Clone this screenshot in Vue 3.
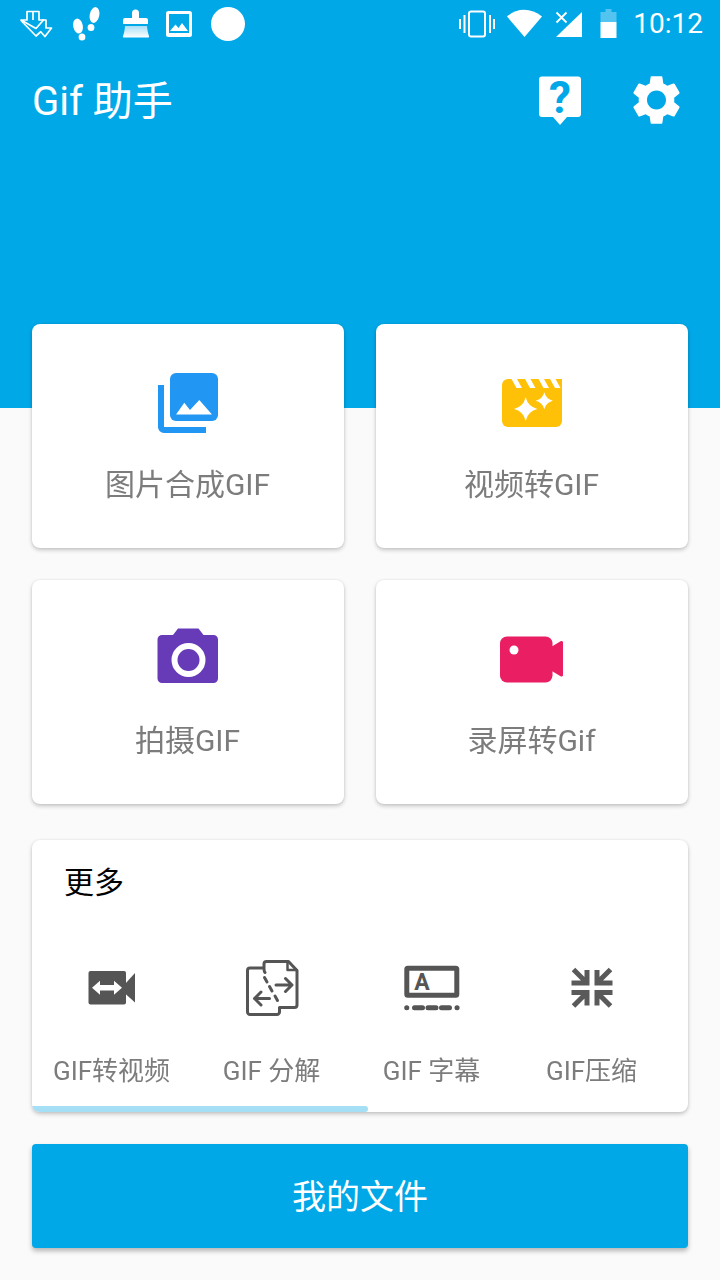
<template>
  <div class="page">
    <header class="header">
      <div class="statusbar">
        <div class="status-left">
          <svg width="36" height="48" viewBox="18 0 36 48" fill="none" stroke="#fff" stroke-width="1.7" stroke-linejoin="round">
            <path d="M27 11.500h12v8.500h4.500l-7.500 8.500-15-8.500h6z" />
            <path d="M33 11.500v8.500M42 20h4v8h5.500l-6.500 8.500-4.500-5" />
            <path d="M21 20.500l15 15.500 5-4.500" />
          </svg>
          <svg width="30" height="48" viewBox="69 0 30 48" fill="#fff">
            <ellipse cx="76" cy="26" rx="4.800" ry="7.500" transform="rotate(-12 76 26)" />
            <ellipse cx="80" cy="37" rx="3.400" ry="3.600" />
            <ellipse cx="92.500" cy="15" rx="4.800" ry="8" transform="rotate(12 92.500 15)" />
            <ellipse cx="89" cy="27.500" rx="3.400" ry="3.500" />
          </svg>
          <svg width="28" height="48" viewBox="119 0 28 48">
            <defs>
              <linearGradient id="broom" x1="0" y1="0" x2="0" y2="1">
                <stop offset="0" stop-color="#a9def6" />
                <stop offset="1" stop-color="#fff" />
              </linearGradient>
            </defs>
            <path d="M129 18v-5a3.500 3.500 0 0 1 7 0v5h7a2 2 0 0 1 2 2v4h-25v-4a2 2 0 0 1 2-2z" fill="#fff" />
            <path d="M122 26h22c.3 4 1 7.500 2 10 .3 1-.3 1.500-1 1.500h-24c-.8 0-1.300-.5-1-1.500 1-2.500 1.800-6 2-10z" fill="url(#broom)" />
          </svg>
          <svg width="27" height="48" viewBox="167 0 27 48">
            <rect x="167" y="11" width="26" height="26" rx="2.500" fill="#fff" />
            <rect x="170" y="14" width="20" height="19" fill="#01a8e8" />
            <path d="M171 31l5.500-6.500 3 3.500 3.500-5 6 8z" fill="#fff" />
          </svg>
          <div class="status-dot"></div>
        </div>
        <div class="status-right">
          <svg width="36" height="48" viewBox="460 0 36 48" fill="none" stroke="#fff" stroke-width="2">
            <rect x="470" y="11.500" width="16" height="25" rx="2" />
            <path d="M465.500 15v18M461 19v10M491 15v18M495 19v10" />
          </svg>
          <svg width="36" height="48" viewBox="508 0 36 48">
            <path d="M508 16.500C518 7.500 532 7.500 543 16.500L525.500 37z" fill="#fff" />
          </svg>
          <svg width="28" height="48" viewBox="556 0 28 48">
            <path d="M583 12v25h-26z" fill="#fff" />
            <path d="M557.500 12.500l10 10M567.500 12.500l-10 10" stroke="#fff" stroke-width="1.800" />
          </svg>
          <svg width="17" height="48" viewBox="600.500 0 17 48">
            <path d="M606 12v-3h6v3h5v10h-16v-10z" fill="#fff" opacity=".32" />
            <rect x="601" y="22" width="16" height="16" fill="#fff" />
          </svg>
          <span class="clock">10:12</span>
        </div>
      </div>
      <div class="toolbar">
        <h1 class="title">{{ title }}</h1>
        <svg class="help" width="42" height="56" viewBox="539 70 42 56">
          <path d="M542 76.500h36a3 3 0 0 1 3 3v34.500a3 3 0 0 1-3 3h-11l-7 8-7-8h-11a3 3 0 0 1-3-3v-34.500a3 3 0 0 1 3-3z" fill="#fff" />
          <text x="560" y="113" text-anchor="middle" class="help-mark">?</text>
        </svg>
        <svg class="gear" width="57" height="58" viewBox="0 0 24 24">
          <path fill="#fff" fill-rule="evenodd" d="M19.430 12.980c.04-.32.07-.64.07-.98s-.03-.66-.07-.98l2.110-1.650c.19-.15.24-.42.12-.64l-2-3.460c-.12-.22-.39-.3-.61-.22l-2.490 1c-.52-.4-1.080-.73-1.690-.98l-.38-2.650C14.460 2.180 14.250 2 14 2h-4c-.25 0-.46.18-.49.42l-.38 2.650c-.61.25-1.170.59-1.690.98l-2.490-1c-.23-.09-.49 0-.61.22l-2 3.460c-.13.22-.07.49.12.64l2.110 1.650c-.04.32-.07.65-.07.98s.03.66.07.98l-2.110 1.650c-.19.15-.24.42-.12.64l2 3.460c.12.22.39.3.61.22l2.490-1c.52.4 1.080.73 1.690.98l.38 2.650c.03.24.24.42.49.42h4c.25 0 .46-.18.49-.42l.38-2.650c.61-.25 1.170-.59 1.690-.98l2.490 1c.23.09.49 0 .61-.22l2-3.460c.12-.22.07-.49-.12-.64l-2.110-1.650zM12 16c-2.210 0-4-1.790-4-4s1.790-4 4-4 4 1.790 4 4-1.790 4-4 4z" />
        </svg>
      </div>
    </header>

    <main class="content">
      <div class="grid">
        <div class="card">
          <svg width="60" height="60" viewBox="158 373 60 60">
            <rect x="170" y="373" width="48" height="48" rx="6" fill="#2196f3" />
            <path d="M176 414.500l8.300-11.800 5.700 7.300 9.300-10 12.700 14.500z" fill="#fff" />
            <path d="M158 385h6v42h42v6h-42a6 6 0 0 1-6-6z" fill="#2196f3" />
          </svg>
          <span class="card-label">图片合成GIF</span>
        </div>
        <div class="card">
          <svg width="60" height="60" viewBox="502 373 60 60">
            <path d="M508 379h54v42a6 6 0 0 1-6 6h-48a6 6 0 0 1-6-6v-36a6 6 0 0 1 6-6z" fill="#ffc107" />
            <path d="M511.500 379h5.500l5 9h-5.500zM525 379h5.500l5 9h-5.500zM538.500 379h5.500l5 9h-5.500zM550 379h5.500l5 9h-5.500z" fill="#fff" />
            <path d="M525.700 397.300Q528 406.700 537.400 409 528 411.300 525.700 420.700 523.400 411.300 514 409 523.400 406.700 525.700 397.300z" fill="#fff" />
            <path d="M544.300 392.200Q546 399 552.800 400.700 546 402.400 544.300 409.200 542.600 402.400 535.800 400.700 542.600 399 544.300 392.200z" fill="#fff" />
          </svg>
          <span class="card-label">视频转GIF</span>
        </div>
        <div class="card">
          <svg width="62" height="60" viewBox="157 629 62 60">
            <path d="M173 635l5-6.500h20.500l5 6.500h10a4.500 4.500 0 0 1 4.500 4.500v39a4.500 4.500 0 0 1-4.500 4.500h-51.500a4.500 4.500 0 0 1-4.500-4.500v-39a4.500 4.500 0 0 1 4.500-4.500z" fill="#673ab7" />
            <circle cx="188.500" cy="660" r="14" fill="none" stroke="#fff" stroke-width="6" />
          </svg>
          <span class="card-label">拍摄GIF</span>
        </div>
        <div class="card">
          <svg width="64" height="60" viewBox="500 629 64 60">
            <rect x="500" y="636.500" width="52.500" height="46" rx="7" fill="#e91e63" />
            <path d="M551 647l10-6a1.500 1.500 0 0 1 2 1.500v32.500a1.500 1.500 0 0 1-2 1.500l-10-6z" fill="#e91e63" />
            <circle cx="514" cy="650" r="4.500" fill="#fff" />
          </svg>
          <span class="card-label">录屏转Gif</span>
        </div>
      </div>

      <section class="more">
        <h2 class="more-title">更多</h2>
        <div class="more-row">
          <div class="more-item">
            <svg width="48" height="60" viewBox="87 958 48 60">
              <rect x="87.500" y="971" width="37.500" height="33.500" rx="2" fill="#555" />
              <path d="M124 984l10-11v29.500l-10-9z" fill="#555" />
              <path d="M91 987.700l8-7v4.300h14v-4.300l8 7-8 7v-4.300h-14v4.300z" fill="#fff" />
            </svg>
            <span class="more-label">GIF转视频</span>
          </div>
          <div class="more-item">
            <svg width="54" height="60" viewBox="244 958 54 60" fill="none" stroke="#555" stroke-width="3" stroke-linecap="round" stroke-linejoin="round">
              <path d="M262 968h-13a2.500 2.500 0 0 0-2.500 2.500v41.500a2.500 2.500 0 0 0 2.500 2.500h27a2.500 2.500 0 0 0 2.500-2.500v-4.500h15a2.500 2.500 0 0 0 2.500-2.500v-34.500l-8.500-9h-22a2.500 2.500 0 0 0-2.500 2.500v4.500c0 2 .5 3.500 1 4" />
              <path d="M286.500 961.500v8.500h9" stroke-width="2.500" />
              <path d="M263.500 977.500l2.500 4.500M268.500 986.500l2.500 4.500M274 996l2.500 4.500" />
              <path d="M275 985h15.500M284.500 978.500l6.500 6.500-6.500 6.500M253.500 998.500h15M260 992l-6.500 6.500 6.500 6.500" />
            </svg>
            <span class="more-label">GIF 分解</span>
          </div>
          <div class="more-item">
            <svg width="58" height="60" viewBox="402 958 58 60">
              <rect x="405.800" y="968.300" width="50" height="27" rx="1" fill="none" stroke="#555" stroke-width="5" />
              <text x="421" y="990" text-anchor="middle" class="caption-mark">A</text>
              <path d="M405.700 1007.700h.1M413.500 1007.700h8M427 1007.700h8M440.500 1007.700h8M456 1007.700h.1" fill="none" stroke="#555" stroke-width="5" stroke-linecap="round" />
            </svg>
            <span class="more-label">GIF 字幕</span>
          </div>
          <div class="more-item">
            <svg width="44" height="60" viewBox="570 958 44 60" fill="none" stroke="#5a5a5a" stroke-width="5">
              <path d="M573.500 969.500l13 13M587 970v13h-15.500" />
              <path d="M610.500 969.500l-13 13M597 970v13h15.500" />
              <path d="M573.500 1006l13-13M587 1005.500v-13h-15.500" />
              <path d="M610.500 1006l-13-13M597 1005.500v-13h15.500" />
            </svg>
            <span class="more-label">GIF压缩</span>
          </div>
        </div>
        <div class="scroll-thumb"></div>
      </section>

      <button class="files-btn">我的文件</button>
    </main>
  </div>
</template>

<script setup>
const title = 'Gif 助手'
</script>

<style>
html,
body {
  margin: 0;
  background: #fafafa;
}
</style>

<style scoped>
.page {
  width: 720px;
  height: 1280px;
  overflow: hidden;
  background: #fafafa;
  font-family: Roboto, "Noto Sans CJK SC", sans-serif;
}

.header {
  height: 408px;
  background: #01a8e8;
}

.statusbar {
  height: 48px;
  display: flex;
  justify-content: space-between;
}

.status-left,
.status-right {
  display: flex;
  align-items: center;
}

.status-left {
  padding-left: 18px;
  gap: 16px;
}

.status-left svg:nth-child(2) {
  margin-left: 1px;
}

.status-left svg:nth-child(3) {
  margin-left: 5px;
}

.status-right {
  padding-right: 17px;
  gap: 12px;
}

.status-right svg:nth-child(4) {
  margin-left: 5px;
}

.status-right svg:nth-child(5) {
  margin-left: 4px;
}

.status-dot {
  width: 34px;
  height: 34px;
  margin-left: 2px;
  border-radius: 50%;
  background: #fff;
}

.clock {
  margin-left: 4px;
  color: #fff;
  font-size: 28px;
  line-height: 50px;
}

.toolbar {
  display: flex;
  align-items: flex-start;
  padding-left: 32px;
  height: 112px;
}

.title {
  flex: 1;
  margin: 0;
  color: #fff;
  font-size: 40px;
  font-weight: 400;
  line-height: 108px;
}

.help {
  margin-top: 22px;
}

.gear {
  margin: 23px 35px 0 47px;
}

.help-mark {
  fill: #01a8e8;
  font-family: Roboto, sans-serif;
  font-size: 44px;
  font-weight: 700;
}

.content {
  margin-top: -84px;
  padding: 0 32px;
}

.grid {
  display: grid;
  grid-template-columns: 312px 312px;
  grid-auto-rows: 224px;
  gap: 32px;
}

.card {
  display: flex;
  flex-direction: column;
  align-items: center;
  padding-top: 49px;
  box-sizing: border-box;
  border-radius: 8px;
  background: #fff;
  box-shadow: 0 2px 4px rgba(0, 0, 0, 0.22), 0 0 2px rgba(0, 0, 0, 0.08);
}

.card svg {
  overflow: visible;
}

.card-label {
  margin-top: 30px;
  padding-right: 1px;
  color: #7c7c7c;
  font-size: 30px;
  line-height: 44px;
  will-change: opacity;
}

.more {
  position: relative;
  height: 272px;
  margin-top: 36px;
  overflow: hidden;
  border-radius: 8px;
  background: #fff;
  box-shadow: 0 2px 4px rgba(0, 0, 0, 0.22), 0 0 2px rgba(0, 0, 0, 0.08);
}

.more-title {
  margin: 0;
  padding: 21px 0 0 32px;
  color: #000;
  font-size: 30px;
  font-weight: 400;
  line-height: 44px;
}

.more-row {
  display: grid;
  grid-template-columns: repeat(4, 160px);
  margin-top: 53px;
}

.more-item {
  display: flex;
  flex-direction: column;
  align-items: center;
}

.more-label {
  margin-top: 34px;
  padding-right: 1px;
  color: #7c7c7c;
  font-size: 26px;
  line-height: 38px;
  will-change: opacity;
}

.scroll-thumb {
  position: absolute;
  left: 0;
  bottom: 0;
  width: 336px;
  height: 6px;
  border-radius: 0 3px 3px 0;
  background: #a4dff6;
}

.files-btn {
  display: block;
  width: 656px;
  height: 104px;
  margin-top: 32px;
  padding: 0 0 4px;
  border: none;
  border-radius: 4px;
  background: #01a8e8;
  box-shadow: 0 3px 5px rgba(0, 0, 0, 0.28);
  color: #fff;
  font-family: inherit;
  font-size: 34px;
}

.caption-mark {
  fill: #555;
  font-family: Roboto, sans-serif;
  font-size: 23px;
  font-weight: 700;
}
</style>
